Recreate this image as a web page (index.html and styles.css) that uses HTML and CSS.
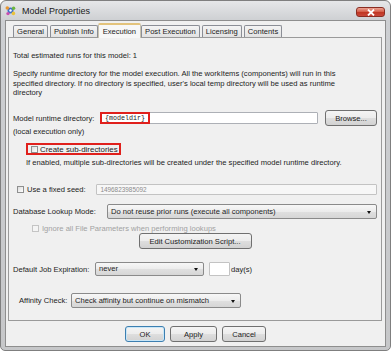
FILE: index.html
```html
<!DOCTYPE html>
<html lang="en">
<head>
  <meta charset="UTF-8">
  <title>Model Properties</title>
  <link rel="stylesheet" href="styles.css">
</head>
<body>
  <div class="window">
    <div class="titlebar">
      <svg class="app-icon" width="11" height="11" viewBox="0 0 11 11">
        <circle cx="5.5" cy="5.5" r="3" fill="#3f6fc8"/>
        <circle cx="2.3" cy="3" r="1.8" fill="#e9962f"/>
        <circle cx="8.6" cy="3.2" r="1.7" fill="#6bb53c"/>
        <circle cx="3" cy="8.6" r="1.7" fill="#c94fb0"/>
        <circle cx="8.4" cy="8.4" r="1.8" fill="#e9c23a"/>
        <circle cx="5.5" cy="5.5" r="1.2" fill="#ffffff"/>
      </svg>
      <span class="title">Model Properties</span>
      <span class="close">
        <svg width="8" height="7" viewBox="0 0 8 7">
          <path d="M1 0.5 L7 6.5 M7 0.5 L1 6.5" stroke="#ffffff" stroke-width="1.8"/>
        </svg>
      </span>
    </div>

    <div class="client">
      <div class="tabs">
        <span class="tab">General</span>
        <span class="tab">Publish Info</span>
        <span class="tab active">Execution</span>
        <span class="tab">Post Execution</span>
        <span class="tab">Licensing</span>
        <span class="tab">Contents</span>
      </div>

      <div class="panel">
        <p class="line total">Total estimated runs for this model: 1</p>
        <p class="desc">
          Specify runtime directory for the model execution. All the workItems (components) will run in this<br>
          specified directory. If no directory is specified, user's local temp directory will be used as runtime<br>
          directory
        </p>

        <div class="row dir-row">
          <span class="label dir-label">Model runtime directory:</span>
          <span class="field dir-field"><span class="marked">{modeldir}</span></span>
          <button class="btn browse">Browse...</button>
        </div>
        <p class="line note">(local execution only)</p>

        <div class="row sub-row">
          <span class="check-label marked-box"><span class="box"></span>Create sub-directories</span>
        </div>
        <p class="line hint">If enabled, multiple sub-directories will be created under the specified model runtime directory.</p>

        <div class="row seed-row">
          <span class="box"></span>
          <span class="label seed-label">Use a fixed seed:</span>
          <span class="field seed-field">1496823985092</span>
        </div>

        <div class="row lookup-row">
          <span class="label lookup-label">Database Lookup Mode:</span>
          <span class="combo lookup-combo">Do not reuse prior runs (execute all components)<i class="arrow"></i></span>
        </div>

        <div class="row ignore-row">
          <span class="box disabled"></span>
          <span class="label muted">Ignore all File Parameters when performing lookups</span>
        </div>

        <div class="row script-row">
          <button class="btn script-btn">Edit Customization Script...</button>
        </div>

        <div class="row expire-row">
          <span class="label expire-label">Default Job Expiration:</span>
          <span class="combo expire-combo">never<i class="arrow"></i></span>
          <span class="field days-field"></span>
          <span class="label">day(s)</span>
        </div>

        <div class="row affinity-row">
          <span class="label affinity-label">Affinity Check:</span>
          <span class="combo affinity-combo">Check affinity but continue on mismatch<i class="arrow"></i></span>
        </div>
      </div>

      <div class="actions">
        <button class="btn ok">OK</button>
        <button class="btn apply">Apply</button>
        <button class="btn cancel">Cancel</button>
      </div>
    </div>
  </div>
</body>
</html>
```

FILE: styles.css
```css
:root {
  --frame: #c6c7c9;
  --face: #f0f0f0;
  --line: #9a9a9a;
  --text: #1c1c1c;
  --muted: #a2a2a2;
  --mark: #e0201c;
}
body {
  margin: 0;
  background: #ffffff;
  font-family: "Liberation Sans", Arial, sans-serif;
  font-size: 7.6px;
  color: var(--text);
}
p {
  margin: 0;
}

/* window frame */
.window {
  width: 391px;
  height: 351px;
  box-sizing: border-box;
  border: 1px solid #7f7f7f;
  border-radius: 6px 6px 5px 5px;
  background: linear-gradient(#e6e7e9, #cdcfd2 20px, var(--frame));
  display: flex;
  flex-direction: column;
}
.titlebar {
  height: 19px;
  display: flex;
  align-items: center;
  padding: 0 5px 0 4px;
}
.app-icon {
  flex: none;
}
.title {
  margin-left: 6px;
  font-size: 9px;
  color: #202020;
}
.close {
  margin-left: auto;
  align-self: flex-start;
  margin-top: 6px;
  width: 29px;
  height: 10px;
  box-sizing: border-box;
  border: 1px solid #8a2d22;
  border-radius: 3px;
  background: linear-gradient(#eba393, #d35a45 50%, #bf3521 51%, #c9473a);
  display: flex;
  align-items: center;
  justify-content: center;
}
.client {
  flex: 1;
  margin: 0 4px 3px;
  border: 1px solid #8e8e8e;
  background: var(--face);
  display: flex;
  flex-direction: column;
}

/* tabs */
.tabs {
  height: 16px;
  display: flex;
  align-items: flex-end;
  padding-left: 7px;
}
.tab {
  height: 12px;
  line-height: 11px;
  box-sizing: border-box;
  padding: 0 3px;
  margin-right: 2px;
  border: 1px solid #8b8e96;
  border-bottom: none;
  border-radius: 2px 2px 0 0;
  background: linear-gradient(#f4f4f4, #e2e2e2);
}
.tab.active {
  height: 15px;
  line-height: 14px;
  margin: 0 0 -1px -2px;
  padding: 0 4px;
  border-color: #e3c37c #c9c3b0 #c9c3b0;
  border-top-width: 2px;
  background: #f7f7f7;
  position: relative;
}
.tab.active + .tab {
  margin-left: 0;
}

/* panel */
.panel {
  margin: 0 3px 0 2px;
  border: 1px solid var(--line);
  padding: 13px 4px 12px;
}
.line {
  height: 10px;
  line-height: 10px;
}
.desc {
  margin-top: 8px;
  line-height: 9.7px;
}
.row {
  display: flex;
  align-items: center;
}
.label {
  white-space: nowrap;
}
.muted {
  color: var(--muted);
}

.field {
  box-sizing: border-box;
  border: 1px solid #adb0b6;
  border-radius: 1px;
  background: #ffffff;
}
.box {
  flex: none;
  width: 7px;
  height: 7px;
  box-sizing: border-box;
  border: 1px solid #8e8f8f;
  background: linear-gradient(135deg, #dcdcdc, #ffffff);
}
.box.disabled {
  border-color: #c4c4c4;
  background: #f4f4f4;
}

.combo {
  position: relative;
  box-sizing: border-box;
  height: 15px;
  line-height: 13px;
  padding-left: 3px;
  border: 1px solid #8a8a8a;
  border-radius: 2px;
  background: linear-gradient(#f7f7f7, #ececec 50%, #e0e0e0 51%, #d6d6d6);
  white-space: nowrap;
}
.arrow {
  position: absolute;
  right: 5px;
  top: 6px;
  border-left: 2.5px solid transparent;
  border-right: 2.5px solid transparent;
  border-top: 3px solid #111111;
}

.btn {
  height: 16px;
  padding: 0;
  box-sizing: border-box;
  border: 1px solid #707070;
  border-radius: 3px;
  background: linear-gradient(#f4f4f4, #ececec 50%, #dedede 51%, #d2d2d2);
  font: inherit;
  color: var(--text);
}

/* rows */
.dir-row {
  margin-top: 12px;
  height: 16px;
}
.dir-label {
  width: 87px;
}
.dir-field {
  width: 218px;
  height: 12px;
  display: flex;
}
.marked {
  height: 12px;
  box-sizing: border-box;
  margin: -1px 0 0 -1px;
  padding: 0 3px;
  border: 2px solid var(--mark);
  font-family: "Liberation Mono", monospace;
  font-size: 6.7px;
  line-height: 8px;
}
.browse {
  width: 52px;
  margin-left: 7px;
}
.note {
  margin-top: 1px;
}

.sub-row {
  margin-top: 6px;
  height: 12px;
  padding-left: 13px;
}
.check-label {
  display: flex;
  align-items: center;
  gap: 2px;
  height: 12px;
  box-sizing: border-box;
  padding: 0 1px 0 3px;
  font-size: 7.9px;
}
.marked-box {
  border: 2px solid var(--mark);
}
.hint {
  margin-top: 3px;
  padding-left: 13px;
}

.seed-row {
  margin-top: 16px;
  height: 11px;
  padding-left: 4px;
}
.seed-label {
  margin-left: 3px;
  width: 70px;
}
.seed-field {
  width: 283px;
  height: 11px;
  line-height: 9px;
  padding-left: 3px;
  font-size: 6.4px;
  color: #8c8c8c;
  border-color: #c3c3c3;
  background: #f7f7f7;
}

.lookup-row {
  margin-top: 9px;
  height: 15px;
}
.lookup-label {
  width: 94px;
}
.lookup-combo {
  width: 270px;
}

.ignore-row {
  margin-top: 4px;
  height: 10px;
  padding-left: 19px;
  gap: 3px;
}

.script-row {
  height: 16px;
  justify-content: center;
}
.script-btn {
  width: 113px;
}

.expire-row {
  margin-top: 13px;
  height: 14px;
}
.expire-label {
  width: 82px;
}
.expire-combo {
  width: 109px;
  height: 14px;
  line-height: 12px;
}
.expire-combo .arrow {
  top: 5px;
}
.days-field {
  width: 21px;
  height: 14px;
  margin: 0 1px 0 5px;
  border-color: #c3c3c3;
}

.affinity-row {
  margin-top: 17px;
  height: 15px;
  padding-left: 6px;
}
.affinity-label {
  width: 52px;
}
.affinity-combo {
  width: 170px;
}

/* dialog buttons */
.actions {
  margin-top: 5px;
  display: flex;
  justify-content: center;
  gap: 5px;
}
.ok {
  width: 40px;
  border-color: #3c7fb1;
  box-shadow: inset 0 0 0 1px #c9e6f7;
}
.apply {
  width: 47px;
}
.cancel {
  width: 44px;
}
```
